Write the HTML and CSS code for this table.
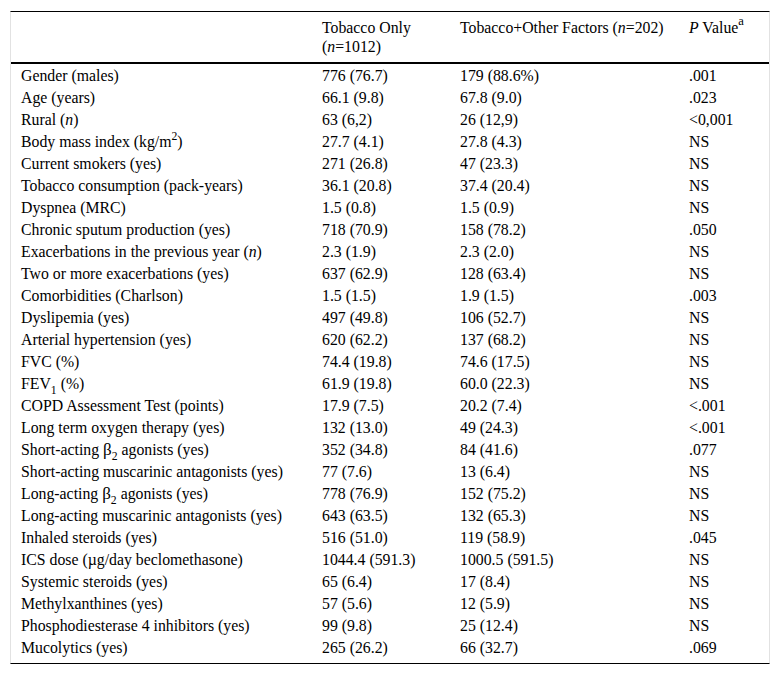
FILE: index.html
```html
<!DOCTYPE html>
<html>
<head>
<meta charset="utf-8">
<link rel="stylesheet" href="styles.css">
</head>
<body>
<div class="frame">
<table class="data">
<colgroup>
<col class="c1"><col class="c2"><col class="c3"><col class="c4">
</colgroup>
<thead>
<tr>
<th></th>
<th>Tobacco Only<br>(<i>n</i>=1012)</th>
<th>Tobacco+Other Factors (<i>n</i>=202)</th>
<th><i>P</i> Value<sup>a</sup></th>
</tr>
</thead>
<tbody>
<tr><td>Gender (males)</td><td>776 (76.7)</td><td>179 (88.6%)</td><td>.001</td></tr>
<tr><td>Age (years)</td><td>66.1 (9.8)</td><td>67.8 (9.0)</td><td>.023</td></tr>
<tr><td>Rural (<i>n</i>)</td><td>63 (6,2)</td><td>26 (12,9)</td><td>&lt;0,001</td></tr>
<tr><td>Body mass index (kg/m<sup>2</sup>)</td><td>27.7 (4.1)</td><td>27.8 (4.3)</td><td>NS</td></tr>
<tr><td>Current smokers (yes)</td><td>271 (26.8)</td><td>47 (23.3)</td><td>NS</td></tr>
<tr><td>Tobacco consumption (pack-years)</td><td>36.1 (20.8)</td><td>37.4 (20.4)</td><td>NS</td></tr>
<tr><td>Dyspnea (MRC)</td><td>1.5 (0.8)</td><td>1.5 (0.9)</td><td>NS</td></tr>
<tr><td>Chronic sputum production (yes)</td><td>718 (70.9)</td><td>158 (78.2)</td><td>.050</td></tr>
<tr><td>Exacerbations in the previous year (<i>n</i>)</td><td>2.3 (1.9)</td><td>2.3 (2.0)</td><td>NS</td></tr>
<tr><td>Two or more exacerbations (yes)</td><td>637 (62.9)</td><td>128 (63.4)</td><td>NS</td></tr>
<tr><td>Comorbidities (Charlson)</td><td>1.5 (1.5)</td><td>1.9 (1.5)</td><td>.003</td></tr>
<tr><td>Dyslipemia (yes)</td><td>497 (49.8)</td><td>106 (52.7)</td><td>NS</td></tr>
<tr><td>Arterial hypertension (yes)</td><td>620 (62.2)</td><td>137 (68.2)</td><td>NS</td></tr>
<tr><td>FVC (%)</td><td>74.4 (19.8)</td><td>74.6 (17.5)</td><td>NS</td></tr>
<tr><td>FEV<sub>1</sub> (%)</td><td>61.9 (19.8)</td><td>60.0 (22.3)</td><td>NS</td></tr>
<tr><td>COPD Assessment Test (points)</td><td>17.9 (7.5)</td><td>20.2 (7.4)</td><td>&lt;.001</td></tr>
<tr><td>Long term oxygen therapy (yes)</td><td>132 (13.0)</td><td>49 (24.3)</td><td>&lt;.001</td></tr>
<tr><td>Short-acting <span class="beta">β</span><sub>2</sub> agonists (yes)</td><td>352 (34.8)</td><td>84 (41.6)</td><td>.077</td></tr>
<tr><td>Short-acting muscarinic antagonists (yes)</td><td>77 (7.6)</td><td>13 (6.4)</td><td>NS</td></tr>
<tr><td>Long-acting <span class="beta">β</span><sub>2</sub> agonists (yes)</td><td>778 (76.9)</td><td>152 (75.2)</td><td>NS</td></tr>
<tr><td>Long-acting muscarinic antagonists (yes)</td><td>643 (63.5)</td><td>132 (65.3)</td><td>NS</td></tr>
<tr><td>Inhaled steroids (yes)</td><td>516 (51.0)</td><td>119 (58.9)</td><td>.045</td></tr>
<tr><td>ICS dose (µg/day beclomethasone)</td><td>1044.4 (591.3)</td><td>1000.5 (591.5)</td><td>NS</td></tr>
<tr><td>Systemic steroids (yes)</td><td>65 (6.4)</td><td>17 (8.4)</td><td>NS</td></tr>
<tr><td>Methylxanthines (yes)</td><td>57 (5.6)</td><td>12 (5.9)</td><td>NS</td></tr>
<tr><td>Phosphodiesterase 4 inhibitors (yes)</td><td>99 (9.8)</td><td>25 (12.4)</td><td>NS</td></tr>
<tr><td>Mucolytics (yes)</td><td>265 (26.2)</td><td>66 (32.7)</td><td>.069</td></tr>
</tbody>
</table>
</div>
</body>
</html>
```

FILE: styles.css
```css
html, body {
  margin: 0;
  padding: 0;
  background: #fff;
}

body {
  font-family: "Liberation Serif", "Times New Roman", serif;
  font-size: 15.8px;
  color: #000;
}

.frame {
  box-sizing: border-box;
  width: 760px;
  margin: 11px 0 0 10px;
  border-top: 1px solid #000;
  border-bottom: 1px solid #000;
  border-left: 1px solid #e2e2e2;
  border-right: 1px solid #e2e2e2;
  padding-bottom: 5px;
}

.data {
  width: 100%;
  border-collapse: collapse;
  table-layout: fixed;
}

.c1 { width: 301px; }
.c2 { width: 138px; }
.c3 { width: 229px; }
.c4 { width: 90px; }

.data th {
  font-weight: normal;
  text-align: left;
  vertical-align: top;
  line-height: 19px;
  padding: 6px 0 6px 10px;
  height: 38px;
  border-bottom: 2px solid #000;
}

.data td {
  padding: 1px 0 0 10px;
  height: 21px;
  line-height: 21px;
  white-space: nowrap;
  vertical-align: middle;
}

sup, sub {
  font-size: 0.74em;
  line-height: 0;
}

sup {
  vertical-align: 0.6em;
}

.data th sup {
  font-size: 0.8em;
}

sub {
  vertical-align: -0.45em;
}

.beta {
  font-size: 1.08em;
}
```
